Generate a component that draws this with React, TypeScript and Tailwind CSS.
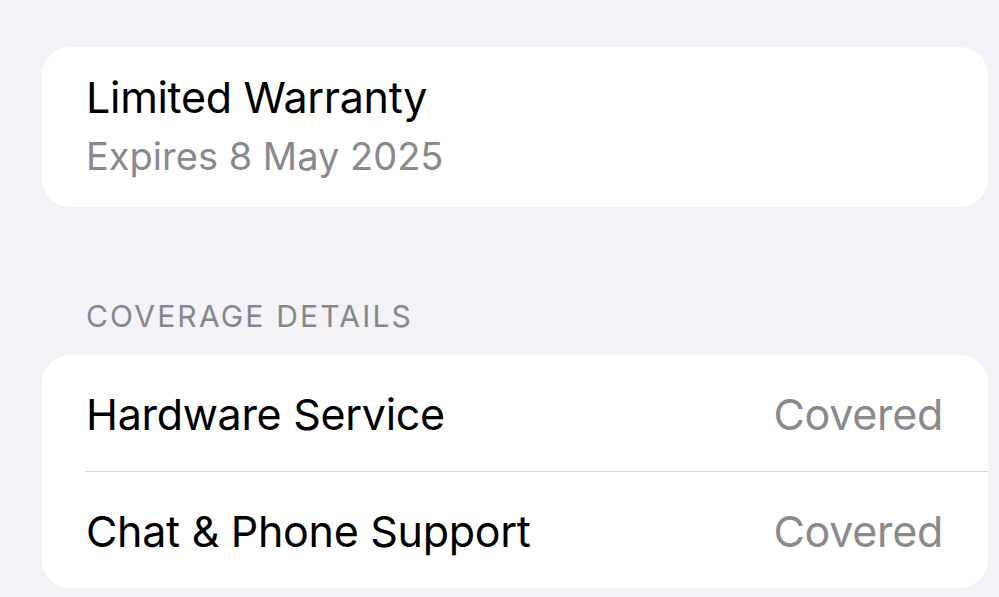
const ROWS = [
  { label: 'Hardware Service', value: 'Covered' },
  { label: 'Chat & Phone Support', value: 'Covered' },
];

export default function App() {
  return (
    <div
      className="min-h-[597px] w-full bg-[#f2f2f7] pl-[42px] pr-[11px] pt-[47px]"
      style={{ fontFamily: 'Inter, "Noto Sans", sans-serif' }}
    >
      {/* Warranty card */}
      <div className="rounded-[28px] bg-white px-[44px] pt-[29px] pb-[32px]">
        <div className="text-[43px] leading-none tracking-[-0.3px] text-black">Limited Warranty</div>
        <div className="mt-[18px] text-[38px] leading-none text-[#8a8a8e]">Expires 8 May 2025</div>
      </div>

      {/* Coverage header */}
      <div className="mt-[94px] pl-[44px] text-[30px] leading-none tracking-[2.2px] text-[#86868b]">
        COVERAGE DETAILS
      </div>

      {/* Coverage list */}
      <div className="mt-[24px] rounded-[28px] bg-white">
        {ROWS.map((row, idx) => (
          <div key={row.label}>
            {idx > 0 && <div className="ml-[43px] h-px bg-[#d8d8dc]" />}
            <div className="flex h-[116px] items-center justify-between pl-[44px] pr-[45px] pt-[2px]">
              <span className="text-[43px] leading-none tracking-[-0.3px] text-black">{row.label}</span>
              <span className="text-[43px] leading-none tracking-[-0.3px] text-[#8a8a8e]">{row.value}</span>
            </div>
          </div>
        ))}
      </div>
    </div>
  );
}
